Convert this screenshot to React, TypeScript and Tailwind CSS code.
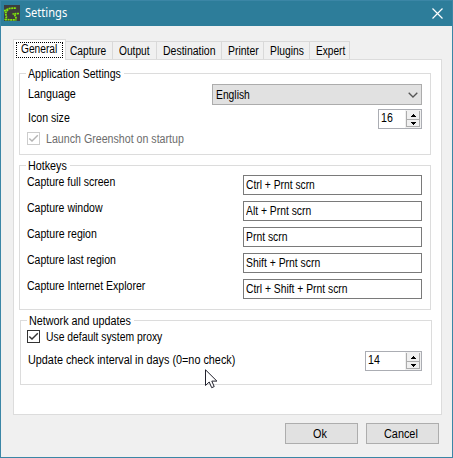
import { useLayoutEffect, useRef, useState } from "react";

type TextProps = { w: number; children: string; className?: string };

// A single-line label condensed to a fixed advance width.
function Label({ w, children, className = "" }: TextProps) {
  const ref = useRef<HTMLSpanElement>(null);
  const [scale, setScale] = useState(1);
  useLayoutEffect(() => {
    if (ref.current) setScale((w - 0.5) / ref.current.offsetWidth);
  }, [w, children]);
  return (
    <span className={`block h-4 shrink-0 leading-4 ${className}`} style={{ width: w }}>
      <span
        ref={ref}
        className="inline-block origin-left whitespace-nowrap"
        style={{ transform: `scaleX(${scale})` }}
      >
        {children}
      </span>
    </span>
  );
}

function Legend({ w, children }: TextProps) {
  return (
    <div className="ml-[6px] -mt-[8px] h-4 w-fit bg-white pr-[3px] pl-[2px]">
      <Label w={w}>{children}</Label>
    </div>
  );
}

function Check({ disabled = false }: { disabled?: boolean }) {
  return (
    <span
      className={`block size-[13px] shrink-0 border bg-white ${
        disabled ? "border-[#cccccc] text-[#b4b4b4]" : "border-[#333333] text-[#333333]"
      }`}
    >
      <svg viewBox="0 0 11 11" className="block size-[11px]" fill="none" stroke="currentColor" strokeWidth="1.4">
        <path d="M1.3 5.4 L4 8.1 L9.8 2.2" />
      </svg>
    </span>
  );
}

function Spinner({ value, className }: { value: string; className: string }) {
  return (
    <div className={`flex h-5 justify-between border border-[#abadb3] bg-white pl-[2px] ${className}`}>
      <Label w={12}>{value}</Label>
      <div className="flex w-[16px] flex-col bg-[#f0f0f0] py-px pr-px pl-px">
        <div className="flex h-2 w-[14px] items-center justify-center border-x border-[#acacac] bg-[#f0f0f0]">
          <svg width="5" height="3" viewBox="0 0 5 3" shapeRendering="crispEdges">
            <path d="M2 0h1v1h1v1h1v1H0V2h1V1h1z" fill="#000" />
          </svg>
        </div>
        <div className="flex h-2 w-[14px] items-center justify-center border border-[#acacac] bg-[#f0f0f0]">
          <svg width="5" height="3" viewBox="0 0 5 3" shapeRendering="crispEdges">
            <path d="M0 0h5v1H4v1H3v1H2V2H1V1H0z" fill="#000" />
          </svg>
        </div>
      </div>
    </div>
  );
}

const tabs = [
  { name: "Capture", w: 37, box: "w-[47px] pl-[4px]" },
  { name: "Output", w: 31, box: "w-[44px] pl-[6px]" },
  { name: "Destination", w: 53, box: "w-[65px] pl-[6px]" },
  { name: "Printer", w: 31, box: "w-[42px] pl-[6px]" },
  { name: "Plugins", w: 34, box: "w-[46px] pl-[6px]" },
  { name: "Expert", w: 30, box: "w-[40px] pl-[6px]" },
];

const hotkeys = [
  { name: "Capture full screen", w: 89, keys: "Ctrl + Prnt scrn", kw: 69 },
  { name: "Capture window", w: 76, keys: "Alt + Prnt scrn", kw: 66 },
  { name: "Capture region", w: 70, keys: "Prnt scrn", kw: 42 },
  { name: "Capture last region", w: 89, keys: "Shift + Prnt scrn", kw: 75 },
  { name: "Capture Internet Explorer", w: 119, keys: "Ctrl + Shift + Prnt scrn", kw: 102 },
];

export default function App() {
  return (
    <div className="relative flex h-[458px] w-[453px] flex-col overflow-hidden border border-[#3b86a6] bg-[#f0f0f0] font-['Liberation_Sans',Arial,sans-serif] text-[12px] text-black">
      <header className="flex h-[25px] shrink-0 bg-[#2d7d9a] pl-[3px] text-white">
        <svg width="16" height="16" viewBox="0 0 16 16" className="mt-[4px] shrink-0">
          <rect width="16" height="16" fill="#3d3d3d" />
          <g fill="none" stroke="#80e80a" strokeWidth="1.7" strokeDasharray="2 .6">
            <path d="M0 6L5 3.5L12.5 3" />
            <path d="M4 4.5L1.5 8L2.5 12L1 15" />
            <path d="M1 14.5L6 14.8L12.5 15" />
            <path d="M15 8.5L8.5 9" />
            <path d="M10.5 9.5L12.5 14" />
          </g>
        </svg>
        <Label w={43} className="mt-[4px] ml-[5px] font-['Noto_Sans',sans-serif]">
          Settings
        </Label>
        <svg width="11" height="11" viewBox="0 0 11 11" className="mt-[7px] mr-[9px] ml-auto" stroke="#fff" strokeWidth="1.2">
          <path d="M.5 .5l10 10M10.5 .5l-10 10" />
        </svg>
      </header>

      <nav className="mt-[13px] ml-[12px] flex h-[20px] shrink-0 items-end">
        <div className="z-10 -mb-px h-[21px] w-[53px] border border-b-0 border-[#dcdcdc] bg-white px-[2px] pt-[2px]">
          <div className="h-[16px] w-[47px] border border-dotted border-black pl-[4px]">
            <Label w={37} className="-mt-[2px]">General</Label>
          </div>
        </div>
        {tabs.map((t) => (
          <div key={t.name} className={`h-[18px] border-t border-r border-[#d9d9d9] pt-px ${t.box}`}>
            <Label w={t.w}>{t.name}</Label>
          </div>
        ))}
      </nav>

      <main className="ml-[12px] h-[356px] w-[429px] shrink-0 border border-[#dcdcdc] bg-white pt-[13px] pl-[5px]">
        <section className="h-[82px] w-[412px] border border-[#dcdcdc]">
          <Legend w={93}>Application Settings</Legend>
          <div className="mt-[2px] ml-[8px] flex h-[21px] justify-between pr-[8px]">
            <Label w={48} className="mt-[2px]">Language</Label>
            <div className="flex h-[21px] w-[210px] items-center justify-between border border-[#acacac] bg-[#e1e1e1] pr-[3px] pl-[3px]">
              <Label w={34}>English</Label>
              <svg width="10" height="6" viewBox="0 0 10 6" fill="none" stroke="#555" strokeWidth="1.3">
                <path d="M.7 .7L5 5L9.3 .7" />
              </svg>
            </div>
          </div>
          <div className="mt-[4px] ml-[8px] flex h-5 justify-between pr-[8px]">
            <Label w={42} className="mt-px">Icon size</Label>
            <Spinner value="16" className="w-[44px]" />
          </div>
          <div className="mt-[2px] ml-[7px] flex">
            <div className="mt-px"><Check disabled /></div>
            <Label w={138} className="ml-[6px] text-[#6d6d6d]">Launch Greenshot on startup</Label>
          </div>
        </section>

        <section className="mt-[10px] h-[145px] w-[412px] border border-[#dcdcdc]">
          <Legend w={39}>Hotkeys</Legend>
          <div className="mt-px ml-[7px] flex flex-col gap-[6px] pr-[8px]">
            {hotkeys.map((h) => (
              <div key={h.name} className="flex h-5 justify-between">
                <Label w={h.w} className="-mt-px">{h.name}</Label>
                <div className="h-5 w-[179px] border border-[#7a7a7a] bg-white pt-px pl-[2px]">
                  <Label w={h.kw}>{h.keys}</Label>
                </div>
              </div>
            ))}
          </div>
        </section>

        <section className="mt-[10px] ml-px h-[65px] w-[412px] border border-[#dcdcdc]">
          <Legend w={102}>Network and updates</Legend>
          <div className="ml-[6px] flex h-4">
            <div className="mt-px"><Check /></div>
            <Label w={117} className="ml-[6px]">Use default system proxy</Label>
          </div>
          <div className="mt-[6px] ml-[7px] flex h-5 justify-between pr-[9px]">
            <Label w={208} className="mt-px">Update check interval in days (0=no check)</Label>
            <Spinner value="14" className="w-[57px]" />
          </div>
        </section>
      </main>

      <footer className="mt-[8px] flex gap-[8px] pl-[284px]">
        <button className="flex h-[21px] w-[73px] shrink-0 justify-center border border-[#adadad] bg-[#e1e1e1] pt-[2px] pr-[3px]">
          <Label w={14}>Ok</Label>
        </button>
        <button className="flex h-[21px] w-[73px] shrink-0 justify-center border border-[#adadad] bg-[#e1e1e1] pt-[2px] pr-[3px]">
          <Label w={34}>Cancel</Label>
        </button>
      </footer>

      <svg width="13" height="20" viewBox="0 0 13 20" className="absolute top-[368px] left-[204px]">
        <path d="M.5 .8V16.5L4.2 13L6.7 18.7L9.2 17.6L6.8 12.1H11.9Z" fill="#fff" stroke="#20202c" strokeWidth="1" />
      </svg>
    </div>
  );
}
